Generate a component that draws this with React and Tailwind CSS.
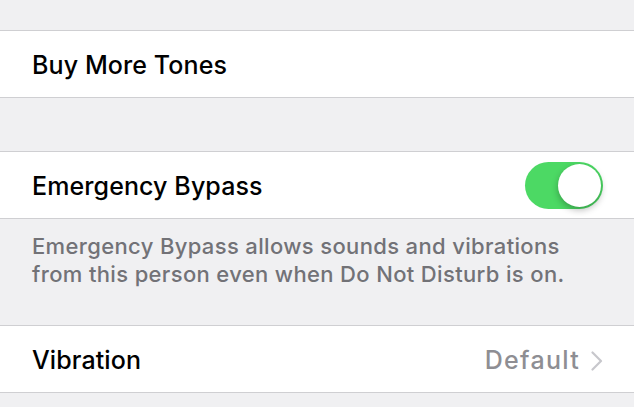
function Row({ children }) {
    return (
        <div className="bg-white border-y border-[#cfcfd2] h-[68px] flex items-center justify-between pl-[32px] pr-[31px]">
            {children}
        </div>
    );
}

function Toggle({ on }) {
    return (
        <div className={`w-[78px] h-[47px] rounded-full p-[2px] flex ${on ? 'bg-[#4cd964] justify-end' : 'bg-[#e5e5ea] justify-start'}`}>
            <div className="w-[43px] h-[43px] rounded-full bg-white shadow-[0_3px_7px_rgba(0,0,0,0.28)]" />
        </div>
    );
}

function Chevron() {
    return (
        <svg width="12" height="20" viewBox="0 0 12 20" fill="none" stroke="#c7c7cc" strokeWidth="2.2" strokeLinecap="round" strokeLinejoin="round">
            <polyline points="1.5,1.5 10,10 1.5,18.5" />
        </svg>
    );
}

export default function App() {
    return (
        <div className="w-[634px] h-[407px] overflow-hidden bg-[#f0f0f2] font-['Inter',sans-serif] text-black">
            <div className="h-[30px]" />
            <Row>
                <span className="text-[25px] font-medium tracking-[0.1px] pt-[3px]">Buy More Tones</span>
            </Row>
            <div className="h-[53px]" />
            <Row>
                <span className="text-[25px] font-medium tracking-[0.1px] pt-[3px]">Emergency Bypass</span>
                <Toggle on />
            </Row>
            <div className="h-[106px] px-[32px] pt-[13px]">
                <p className="text-[22px] font-medium tracking-[0.35px] leading-[28px] text-[#727277]">
                    Emergency Bypass allows sounds and vibrations from this person even when Do Not Disturb is on.
                </p>
            </div>
            <Row>
                <span className="text-[25px] font-medium tracking-[0.1px] pt-[3px]">Vibration</span>
                <span className="flex items-center gap-[11px] text-[25px] font-medium tracking-[1.3px] text-[#8e8e93] pt-[3px]">
                    Default
                    <Chevron />
                </span>
            </Row>
        </div>
    );
}
